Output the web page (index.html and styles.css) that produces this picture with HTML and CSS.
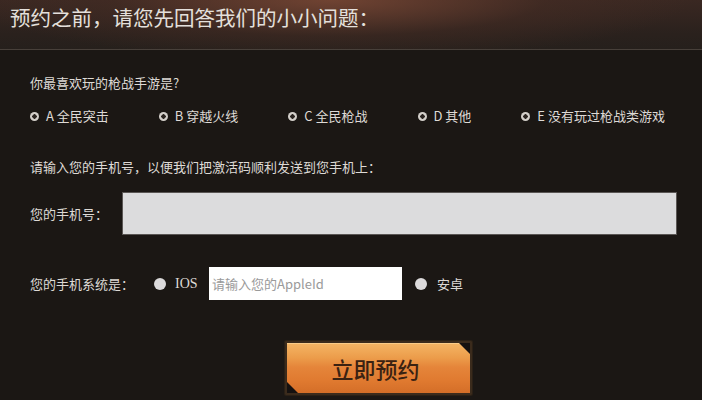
FILE: index.html
```html
<!DOCTYPE html>
<html lang="zh-CN">
<head>
<meta charset="utf-8">
<title>预约</title>
<link rel="stylesheet" href="styles.css">
</head>
<body>
<div class="page">
  <header class="head">
    <h1 class="title">预约之前，请您先回答我们的小小问题：</h1>
  </header>
  <main class="form">
    <p class="question">你最喜欢玩的枪战手游是?</p>
    <div class="options">
      <label class="opt"><span class="dot"></span>A 全民突击</label>
      <label class="opt"><span class="dot"></span>B 穿越火线</label>
      <label class="opt"><span class="dot"></span>C 全民枪战</label>
      <label class="opt"><span class="dot"></span>D 其他</label>
      <label class="opt"><span class="dot"></span>E 没有玩过枪战类游戏</label>
    </div>
    <p class="prompt">请输入您的手机号，以便我们把激活码顺利发送到您手机上：</p>
    <div class="phone-row">
      <span class="label">您的手机号：</span>
      <div class="phone-input"></div>
    </div>
    <div class="sys-row">
      <span class="label">您的手机系统是：</span>
      <span class="circle"></span>
      <span class="ios">IOS</span>
      <div class="apple-input">请输入您的AppleId</div>
      <span class="circle"></span>
      <span class="android">安卓</span>
    </div>
    <div class="btn-wrap">
      <button class="submit" type="button"><span class="tri tri-tr"></span>立即预约<span class="tri tri-bl"></span></button>
    </div>
  </main>
</div>
</body>
</html>
```

FILE: styles.css
```css
* { box-sizing: border-box; }
html, body { margin: 0; padding: 0; }
body {
  width: 702px;
  height: 400px;
  overflow: hidden;
  background: #1c1815;
  font-family: "Noto Sans CJK SC", "Noto Sans", sans-serif;
  color: #dedad6;
}
.page { width: 702px; height: 400px; }
.head {
  height: 50px;
  border-bottom: 1px solid #48403a;
  background:
    radial-gradient(ellipse 360px 60px at 330px 0px, rgba(118,70,52,0.9), rgba(72,45,36,0.45) 60%, rgba(40,30,26,0) 100%),
    linear-gradient(#3a2822, #2a211d 70%, #26201c);
  padding: 3px 0 0 10px;
}
.title {
  margin: 0;
  font-weight: normal;
  font-size: 20.5px;
  line-height: 28px;
  color: #e4e0dc;
}
.form {
  padding: 0 0 0 30px;
  background: #1b1714;
  height: 350px;
}
.question {
  margin: 0;
  padding-top: 24px;
  font-size: 13px;
  line-height: 18px;
}
.options {
  display: flex;
  gap: 50px;
  margin-top: 16px;
  font-size: 13px;
  line-height: 16px;
}
.opt { display: flex; align-items: center; }
.dot {
  width: 9px; height: 9px;
  border-radius: 50%;
  background: radial-gradient(circle, #2a2420 0 2px, #d2cec9 2.4px);
  margin-right: 7px;
}
.prompt {
  margin: 0;
  margin-top: 34px;
  font-size: 13px;
  line-height: 18px;
}
.phone-row {
  display: flex;
  align-items: center;
  margin-top: 16px;
}
.label { font-size: 13px; line-height: 18px; }
.phone-row .label { width: 92px; }
.phone-input {
  width: 555px;
  height: 43px;
  background: #dcdcdd;
  border: 1px solid #5a5654;
}
.sys-row {
  display: flex;
  align-items: center;
  margin-top: 32px;
  height: 33px;
}
.sys-row .label { width: 124px; }
.circle {
  width: 12px; height: 12px;
  border-radius: 50%;
  background: #dcdadb;
}
.ios {
  font-family: "Liberation Serif", serif;
  font-size: 14px;
  margin-left: 9px;
  width: 34px;
}
.apple-input {
  width: 193px;
  height: 33px;
  background: #ffffff;
  color: #9a9a9a;
  font-size: 13px;
  line-height: 33px;
  padding-left: 3px;
  margin-right: 13px;
}
.android { margin-left: 10px; font-size: 13px; }
.btn-wrap { margin-top: 41px; padding-left: 255px; }
.submit {
  position: relative;
  width: 187px;
  height: 54px;
  border: 2px solid #3b2b1c;
  border-radius: 1px;
  background: linear-gradient(#f4b565 0%, #ec9c4a 30%, #e5853a 48%, #e07a30 75%, #d46e28 100%);
  font-family: "Noto Sans CJK SC", sans-serif;
  font-size: 22px;
  font-weight: 500;
  color: #3a2212;
  padding: 0 6px 0 0;
  line-height: 50px;
  box-shadow: inset 0 1px 0 rgba(255,220,160,0.6), 0 0 0 1px #2a2016;
}
.tri { position: absolute; width: 0; height: 0; }
.tri-tr { top: 0; right: 0; border-top: 11px solid #151110; border-left: 11px solid transparent; }
.tri-bl { bottom: 0; left: 0; border-bottom: 11px solid #151110; border-right: 11px solid transparent; }
```
